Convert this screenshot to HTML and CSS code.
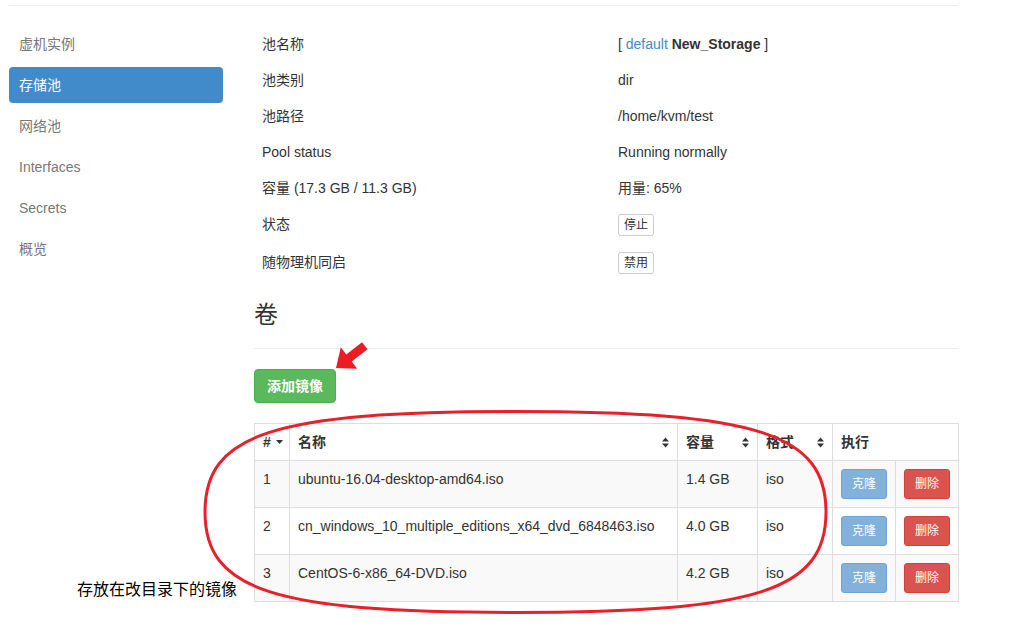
FILE: index.html
```html
<!DOCTYPE html>
<html lang="zh">
<head>
<meta charset="utf-8">
<title>存储池</title>
<link rel="stylesheet" href="styles.css">
</head>
<body>
<div class="page">
  <aside class="sidebar">
    <ul class="pills">
      <li><a href="#">虚机实例</a></li>
      <li class="active"><a href="#">存储池</a></li>
      <li><a href="#">网络池</a></li>
      <li><a href="#">Interfaces</a></li>
      <li><a href="#">Secrets</a></li>
      <li><a href="#">概览</a></li>
    </ul>
  </aside>
  <main class="main">
    <table class="info">
      <colgroup><col class="info-label"><col></colgroup>
      <tbody>
        <tr><td>池名称</td><td>[ <a class="link" href="#">default</a> <strong>New_Storage</strong> ]</td></tr>
        <tr><td>池类别</td><td>dir</td></tr>
        <tr><td>池路径</td><td>/home/kvm/test</td></tr>
        <tr><td>Pool status</td><td>Running normally</td></tr>
        <tr><td>容量 (17.3 GB / 11.3 GB)</td><td>用量: 65%</td></tr>
        <tr><td>状态</td><td><button class="btn-xs">停止</button></td></tr>
        <tr><td>随物理机同启</td><td><button class="btn-xs">禁用</button></td></tr>
      </tbody>
    </table>

    <h3 class="page-header">卷</h3>

    <button class="btn btn-success">添加镜像</button>

    <table class="volumes">
      <colgroup>
        <col class="c-num"><col class="c-name"><col class="c-size"><col class="c-fmt"><col class="c-act"><col class="c-act">
      </colgroup>
      <thead>
        <tr>
          <th>#<svg class="caret" width="7" height="4" viewBox="0 0 7 4"><polygon points="0,0 7,0 3.5,4"/></svg></th>
          <th>名称<span class="sort"><svg width="7" height="11" viewBox="0 0 7 11"><polygon points="0,4.5 3.5,0.5 7,4.5"/><polygon points="0,6.5 7,6.5 3.5,10.5"/></svg></span></th>
          <th>容量<span class="sort"><svg width="7" height="11" viewBox="0 0 7 11"><polygon points="0,4.5 3.5,0.5 7,4.5"/><polygon points="0,6.5 7,6.5 3.5,10.5"/></svg></span></th>
          <th>格式<span class="sort"><svg width="7" height="11" viewBox="0 0 7 11"><polygon points="0,4.5 3.5,0.5 7,4.5"/><polygon points="0,6.5 7,6.5 3.5,10.5"/></svg></span></th>
          <th colspan="2">执行</th>
        </tr>
      </thead>
      <tbody>
        <tr>
          <td>1</td><td>ubuntu-16.04-desktop-amd64.iso</td><td>1.4 GB</td><td>iso</td>
          <td><button class="btn-sm btn-clone">克隆</button></td>
          <td><button class="btn-sm btn-danger">删除</button></td>
        </tr>
        <tr>
          <td>2</td><td>cn_windows_10_multiple_editions_x64_dvd_6848463.iso</td><td>4.0 GB</td><td>iso</td>
          <td><button class="btn-sm btn-clone">克隆</button></td>
          <td><button class="btn-sm btn-danger">删除</button></td>
        </tr>
        <tr>
          <td>3</td><td>CentOS-6-x86_64-DVD.iso</td><td>4.2 GB</td><td>iso</td>
          <td><button class="btn-sm btn-clone">克隆</button></td>
          <td><button class="btn-sm btn-danger">删除</button></td>
        </tr>
      </tbody>
    </table>
  </main>
</div>

<div class="note">存放在改目录下的镜像</div>

<svg class="annot" width="1017" height="634" viewBox="0 0 1017 634">
  <path class="ring" d="M 826 512 C 826 590.4, 757.7 612.5, 515.5 612.5 C 273.3 612.5, 205 590.4, 205 512 C 205 433.6, 273.3 411.5, 515.5 411.5 C 757.7 411.5, 826 433.6, 826 512 Z"/>
  <polygon class="arrow" points="336,368 357.2,368.7 351.75,361.55 367.55,349.35 362,342.25 346.25,354.45 340.8,347.3"/>
</svg>
</body>
</html>
```

FILE: styles.css
```css
* { box-sizing: border-box; }

body {
  margin: 0;
  position: relative;
  width: 1017px;
  height: 634px;
  overflow: hidden;
  font-family: "Liberation Sans", "Noto Sans CJK SC", sans-serif;
  font-size: 14px;
  line-height: 20px;
  color: #333;
  background: #fff;
}

.page {
  display: flex;
  gap: 31px;
  width: 949px;
  margin: 5px 0 0 9px;
  border-top: 1px solid #eee;
}

/* sidebar */
.sidebar { width: 214px; flex: none; padding-top: 20px; }
.pills { list-style: none; margin: 0; padding: 0; }
.pills li + li { margin-top: 5px; }
.pills a {
  display: block;
  padding: 8px 10px;
  line-height: 20px;
  color: #777;
  text-decoration: none;
  border-radius: 4px;
}
.pills .active a { background: #428bca; color: #fff; }

/* main */
.main { width: 704px; flex: none; padding-top: 20px; }

.info { width: 100%; border-collapse: collapse; }
.info .info-label { width: 356px; }
.info td { padding: 8px; line-height: 20px; vertical-align: top; }
.link { color: #428bca; text-decoration: none; }

.btn-xs {
  font-family: inherit;
  font-size: 12px;
  line-height: 18px;
  padding: 1px 5px;
  border: 1px solid #ccc;
  border-radius: 3px;
  background: #fff;
  color: #333;
  display: block;
}

.page-header {
  margin: 20px 0 20px;
  padding-bottom: 20px;
  font-size: 24px;
  line-height: 26px;
  font-weight: normal;
  border-bottom: 1px solid #eee;
}

.btn {
  font-family: inherit;
  font-size: 14px;
  line-height: 20px;
  padding: 6px 12px;
  border-radius: 4px;
  border: 1px solid transparent;
  display: block;
}
.btn-success { background: #5cb85c; border-color: #4cae4c; color: #fff; font-weight: bold; }

/* volumes table */
.volumes {
  width: 704px;
  margin-top: 20px;
  border-collapse: collapse;
  table-layout: fixed;
  border: 1px solid #ddd;
}
.c-num { width: 35px; }
.c-name { width: 388px; }
.c-size { width: 80px; }
.c-fmt { width: 75px; }
.c-act { width: 63px; }

.volumes th, .volumes td {
  border: 1px solid #ddd;
  padding: 8px;
  line-height: 20px;
  text-align: left;
  vertical-align: top;
  white-space: nowrap;
}
.volumes th { font-weight: bold; }
.volumes tbody tr:nth-child(odd) td { background: #f9f9f9; }

.caret { fill: #333; margin-left: 5px; vertical-align: 3px; }
.sort { float: right; height: 20px; display: flex; align-items: center; margin-right: 0; }
.sort svg { fill: #333; display: block; }

.btn-sm {
  font-family: inherit;
  font-size: 12px;
  line-height: 18px;
  padding: 5px 10px;
  border-radius: 3px;
  border: 1px solid transparent;
  color: #fff;
  display: block;
}
.btn-clone { background: #82b1da; border-color: #6ea3d4; }
.btn-danger { background: #d9534f; border-color: #d43f3a; }

/* annotations */
.note {
  position: absolute;
  left: 77px;
  top: 581px;
  font-size: 16px;
  line-height: 18px;
  color: #000;
}
.annot { position: absolute; left: 0; top: 0; pointer-events: none; }
.ring { fill: none; stroke: #e8202a; stroke-width: 3; }
.arrow { fill: #ec1c24; }
```
